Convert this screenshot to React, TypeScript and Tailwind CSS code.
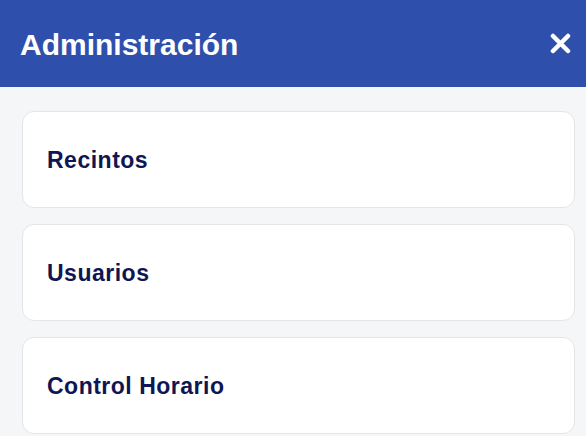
const items = ["Recintos", "Usuarios", "Control Horario"];

export default function App() {
  return (
    <div
      className="min-h-screen bg-[#f5f6f8]"
      style={{ fontFamily: '"Liberation Sans", Arial, sans-serif' }}
    >
      <header className="flex h-[87px] items-center justify-between bg-[#2f4fac] pl-5 pr-[15px]">
        <h1 className="pt-[2px] text-[30px] font-bold text-white">Administración</h1>
        <button className="flex h-[22px] w-[22px] items-center justify-center">
          <svg width="21" height="21" viewBox="0 0 21 21">
            <path
              d="M3 3 L18 18 M18 3 L3 18"
              stroke="white"
              strokeWidth="4.5"
              strokeLinecap="round"
            />
          </svg>
        </button>
      </header>
      <div className="flex flex-col gap-4 pl-[22px] pr-[11px] pt-6">
        {items.map((item) => (
          <div
            key={item}
            className="flex h-[97px] items-center rounded-xl border border-[#e3e5e8] bg-white px-6 pt-[2px]"
          >
            <span className="text-[23px] font-bold tracking-[0.5px] text-[#0f1654]">{item}</span>
          </div>
        ))}
      </div>
    </div>
  );
}
